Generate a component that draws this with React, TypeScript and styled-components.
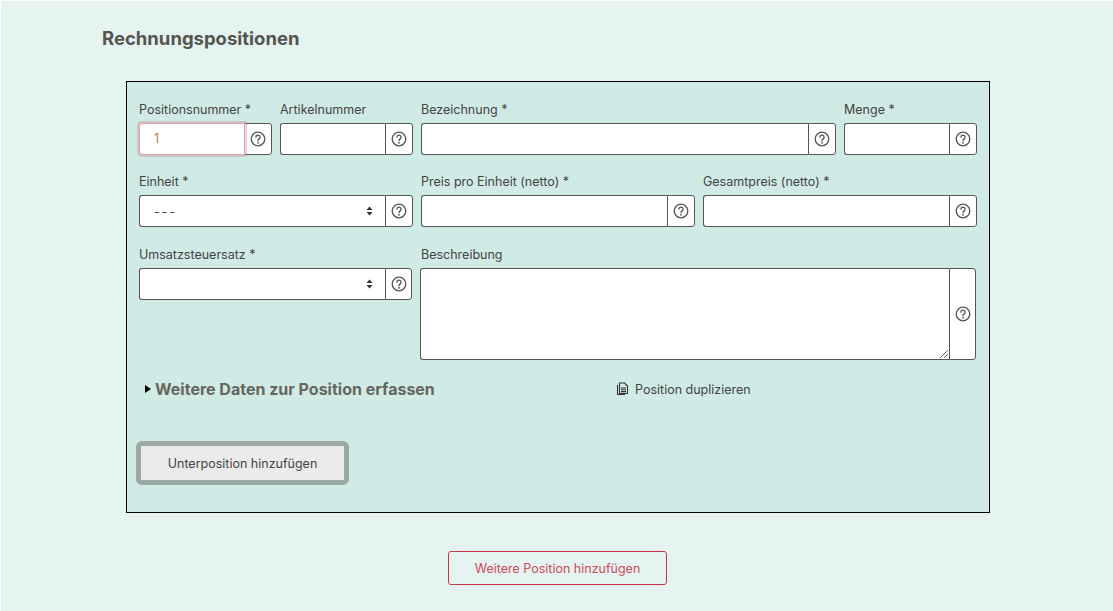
import React from 'react';
import styled, { createGlobalStyle } from 'styled-components';

const GlobalStyle = createGlobalStyle`
  html, body {
    margin: 0;
    padding: 0;
    background: #fff;
    font-family: Inter, Roboto, "Liberation Sans", sans-serif;
  }
`;

const Page = styled.div`
  box-sizing: border-box;
  width: 1112px;
  height: 610px;
  margin: 1px 0 0 1px;
  background: #e5f4f0;
  padding: 25px 123px 0 101px;
`;

const Title = styled.h2`
  margin: 0;
  font-size: 18.5px;
  line-height: 24px;
  font-weight: 700;
  color: #55554d;
`;

const Panel = styled.section`
  box-sizing: border-box;
  width: 864px;
  height: 432px;
  margin: 31px 0 0 24px;
  border: 1px solid #000;
  background: #d0ebe5;
  padding: 18px 12px 0;
`;

const Row = styled.div<{ $mt?: number }>`
  display: grid;
  grid-template-columns: repeat(6, 133px);
  column-gap: 8px;
  margin-top: ${(p) => p.$mt ?? 0}px;
`;

const LastRow = styled.div`
  display: grid;
  grid-template-columns: 273px 556px;
  column-gap: 8px;
  margin-top: 18px;
`;

const Field = styled.div<{ $span?: number }>`
  grid-column: span ${(p) => p.$span ?? 1};
`;

const Label = styled.label<{ $indent?: number }>`
  display: block;
  height: 23px;
  padding-left: ${(p) => p.$indent ?? 0}px;
  font-size: 12.5px;
  line-height: 19px;
  color: #444;
  white-space: nowrap;
`;

const Group = styled.div<{ $h?: number }>`
  display: flex;
  height: ${(p) => p.$h ?? 32}px;
  position: relative;
`;

const Control = styled.div<{ $focus?: boolean }>`
  box-sizing: border-box;
  flex: 1;
  min-width: 0;
  display: flex;
  align-items: center;
  justify-content: space-between;
  padding: 0 12px 2px 14px;
  background: #fff;
  border: 1px solid ${(p) => (p.$focus ? '#e8a0a8' : '#555')};
  border-right: none;
  border-radius: 3px 0 0 3px;
  font-size: 12.5px;
  color: #c07a30;
  position: relative;
  ${(p) =>
    p.$focus
      ? `
    z-index: 1;
    margin-right: -1px;
    border-right: 1px solid #e8a0a8;
    box-shadow: 0 0 0 2px rgba(190, 130, 140, 0.35);
  `
      : ''}
`;

const Placeholder = styled.span`
  font-size: 12.5px;
  letter-spacing: 2px;
  margin-top: 3px;
  color: #444;
`;

const HelpBox = styled.div<{ $w?: number }>`
  box-sizing: border-box;
  flex: 0 0 ${(p) => p.$w ?? 28}px;
  display: flex;
  align-items: center;
  justify-content: center;
  background: #fff;
  border: 1px solid #555;
  border-radius: 0 3px 3px 0;
`;

const ResizeGrip = styled.svg`
  position: absolute;
  right: 0;
  bottom: 0;
`;

const ArrowIcon = styled.svg`
  margin-top: 2px;
`;

const ActionRow = styled.div`
  display: flex;
  align-items: center;
  height: 24px;
  margin-top: 17px;
  padding-left: 6px;
`;

const Triangle = styled.span`
  width: 0;
  height: 0;
  border-top: 4.5px solid transparent;
  border-bottom: 4.5px solid transparent;
  border-left: 6px solid #000;
  margin-right: 4px;
`;

const DetailsTitle = styled.span`
  flex: 0 0 461px;
  font-size: 16px;
  font-weight: 700;
  color: #66665f;
`;

const DuplicateLink = styled.span`
  display: flex;
  align-items: center;
  gap: 6px;
  font-size: 12.5px;
  color: #444;
`;

const SubButton = styled.button`
  box-sizing: border-box;
  display: block;
  width: 213px;
  height: 44px;
  margin: 40px 0 0 -3px;
  background: #ebebeb;
  border: 5px solid #9aa9a4;
  border-radius: 6px;
  font-family: inherit;
  font-size: 12.5px;
  color: #444;
  padding: 0;
`;

const Footer = styled.div`
  display: flex;
  margin: 38px 0 0 346px;
`;

const AddButton = styled.button`
  box-sizing: border-box;
  width: 219px;
  height: 34px;
  background: transparent;
  border: 1px solid #c9354a;
  border-radius: 3px;
  font-family: inherit;
  font-size: 12.5px;
  color: #cf4a5c;
  padding: 0;
`;

function HelpIcon() {
  return (
    <svg width="16" height="16" viewBox="0 0 16 16" fill="none" stroke="#555" strokeWidth="1.3" strokeLinecap="round">
      <circle cx="8" cy="8" r="6.8" />
      <path d="M5.9 6.2a2.1 2.1 0 1 1 3.3 1.7c-.7.5-1.2.9-1.2 1.8" />
      <circle cx="8" cy="11.7" r="0.3" fill="#555" />
    </svg>
  );
}

function SelectArrows() {
  return (
    <ArrowIcon width="7" height="10" viewBox="0 0 7 10" fill="#333">
      <path d="M3.5 0.5 6.5 4H0.5z" />
      <path d="M3.5 9.5 0.5 6h6z" />
    </ArrowIcon>
  );
}

function DocIcon() {
  return (
    <svg width="13" height="14" viewBox="0 0 13 14" fill="none" stroke="#333" strokeWidth="1.1">
      <path d="M3.5 1h5l3 3v7.5h-8z" />
      <path d="M1.5 3v9.5H9" />
      <path d="M5 6h5M5 7.8h5M5 9.6h5" />
    </svg>
  );
}

function InputField(props: { label: string; span?: number; value?: string; focus?: boolean }) {
  return (
    <Field $span={props.span}>
      <Label>{props.label}</Label>
      <Group>
        <Control $focus={props.focus}>{props.value}</Control>
        <HelpBox>
          <HelpIcon />
        </HelpBox>
      </Group>
    </Field>
  );
}

function SelectField(props: { label: string; span?: number; value?: string; helpWidth?: number }) {
  return (
    <Field $span={props.span}>
      <Label>{props.label}</Label>
      <Group>
        <Control>
          <Placeholder>{props.value}</Placeholder>
          <SelectArrows />
        </Control>
        <HelpBox $w={props.helpWidth}>
          <HelpIcon />
        </HelpBox>
      </Group>
    </Field>
  );
}

export default function App() {
  return (
    <>
      <GlobalStyle />
      <Page>
        <Title>Rechnungspositionen</Title>
        <Panel>
          <Row>
            <InputField label="Positionsnummer *" value="1" focus />
            <InputField label="Artikelnummer" />
            <InputField label="Bezeichnung *" span={3} />
            <InputField label="Menge *" />
          </Row>
          <Row $mt={17}>
            <SelectField label="Einheit *" span={2} value="---" />
            <InputField label="Preis pro Einheit (netto) *" span={2} />
            <InputField label="Gesamtpreis (netto) *" span={2} />
          </Row>
          <LastRow>
            <SelectField label="Umsatzsteuersatz *" helpWidth={27} />
            <Field>
              <Label $indent={1}>Beschreibung</Label>
              <Group $h={92}>
                <Control>
                  <ResizeGrip width="10" height="10" viewBox="0 0 10 10" stroke="#666" strokeWidth="1">
                    <path d="M1 9 9 1M5 9l4-4" />
                  </ResizeGrip>
                </Control>
                <HelpBox $w={27}>
                  <HelpIcon />
                </HelpBox>
              </Group>
            </Field>
          </LastRow>
          <ActionRow>
            <Triangle />
            <DetailsTitle>Weitere Daten zur Position erfassen</DetailsTitle>
            <DuplicateLink>
              <DocIcon />
              Position duplizieren
            </DuplicateLink>
          </ActionRow>
          <SubButton>Unterposition hinzufügen</SubButton>
        </Panel>
        <Footer>
          <AddButton>Weitere Position hinzufügen</AddButton>
        </Footer>
      </Page>
    </>
  );
}
